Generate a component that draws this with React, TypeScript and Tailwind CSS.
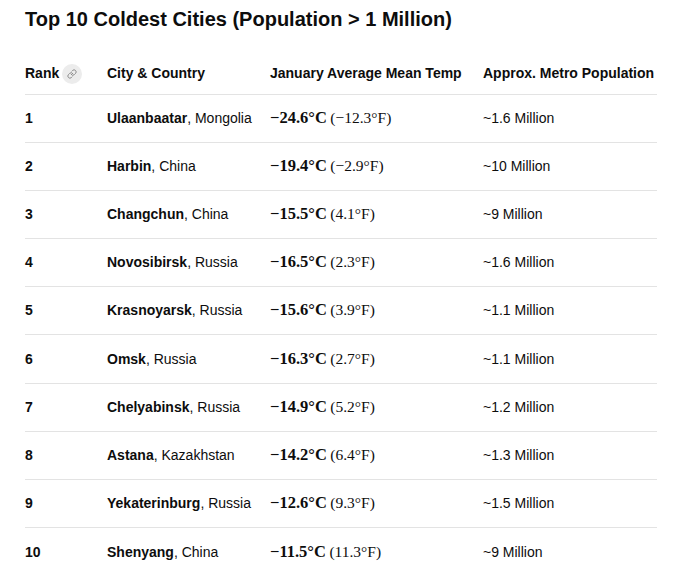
import React from 'react'

const rows = [
  { rank: 1, city: 'Ulaanbaatar', country: 'Mongolia', c: '−24.6°C', f: '(−12.3°F)', pop: '~1.6 Million' },
  { rank: 2, city: 'Harbin', country: 'China', c: '−19.4°C', f: '(−2.9°F)', pop: '~10 Million' },
  { rank: 3, city: 'Changchun', country: 'China', c: '−15.5°C', f: '(4.1°F)', pop: '~9 Million' },
  { rank: 4, city: 'Novosibirsk', country: 'Russia', c: '−16.5°C', f: '(2.3°F)', pop: '~1.6 Million' },
  { rank: 5, city: 'Krasnoyarsk', country: 'Russia', c: '−15.6°C', f: '(3.9°F)', pop: '~1.1 Million' },
  { rank: 6, city: 'Omsk', country: 'Russia', c: '−16.3°C', f: '(2.7°F)', pop: '~1.1 Million' },
  { rank: 7, city: 'Chelyabinsk', country: 'Russia', c: '−14.9°C', f: '(5.2°F)', pop: '~1.2 Million' },
  { rank: 8, city: 'Astana', country: 'Kazakhstan', c: '−14.2°C', f: '(6.4°F)', pop: '~1.3 Million' },
  { rank: 9, city: 'Yekaterinburg', country: 'Russia', c: '−12.6°C', f: '(9.3°F)', pop: '~1.5 Million' },
  { rank: 10, city: 'Shenyang', country: 'China', c: '−11.5°C', f: '(11.3°F)', pop: '~9 Million' },
]

function LinkIcon() {
  return (
    <svg width="10" height="10" viewBox="0 0 24 24" fill="none" stroke="#8a8a8a" strokeWidth="2.4" strokeLinecap="round" strokeLinejoin="round">
      <path d="M10 13a5 5 0 0 0 7.54.54l3-3a5 5 0 0 0-7.07-7.07l-1.72 1.71" />
      <path d="M14 11a5 5 0 0 0-7.54-.54l-3 3a5 5 0 0 0 7.07 7.07l1.71-1.71" />
    </svg>
  )
}

export default function App() {
  return (
    <div className="min-h-screen bg-white px-[25px] pt-[5px] text-[#0d0d0d] font-['Liberation_Sans',Arial,sans-serif]">
      <h1 className="text-[20px] font-bold leading-[28px]">
        Top 10 Coldest Cities (Population &gt; 1 Million)
      </h1>

      <table className="mt-[21px] w-[632px] table-fixed border-collapse text-[14px]">
        <thead>
          <tr className="h-[40px] border-b border-[#e3e3e3] text-left">
            <th className="w-[82px] p-0 font-bold">
              <span className="inline-flex items-center gap-[3px]">
                Rank
                <span className="inline-flex h-[20px] w-[20px] items-center justify-center rounded-full bg-[#ececec]">
                  <LinkIcon />
                </span>
              </span>
            </th>
            <th className="w-[163px] p-0 font-bold">City &amp; Country</th>
            <th className="w-[213px] p-0 font-bold">January Average Mean Temp</th>
            <th className="p-0 font-bold whitespace-nowrap">Approx. Metro Population</th>
          </tr>
        </thead>
        <tbody>
          {rows.map((r, i) => (
            <tr
              key={r.rank}
              className={i < rows.length - 1 ? 'h-[48.2px] border-b border-[#e3e3e3]' : 'h-[48.2px]'}
            >
              <td className="p-0 font-bold">{r.rank}</td>
              <td className="p-0 whitespace-nowrap">
                <span className="font-bold">{r.city}</span>, {r.country}
              </td>
              <td className="p-0 whitespace-nowrap font-['Liberation_Serif','Times_New_Roman',serif]">
                <span className="text-[16.5px] font-bold">{r.c}</span>{' '}
                <span className="text-[15.5px]">{r.f}</span>
              </td>
              <td className="p-0">{r.pop}</td>
            </tr>
          ))}
        </tbody>
      </table>
    </div>
  )
}
